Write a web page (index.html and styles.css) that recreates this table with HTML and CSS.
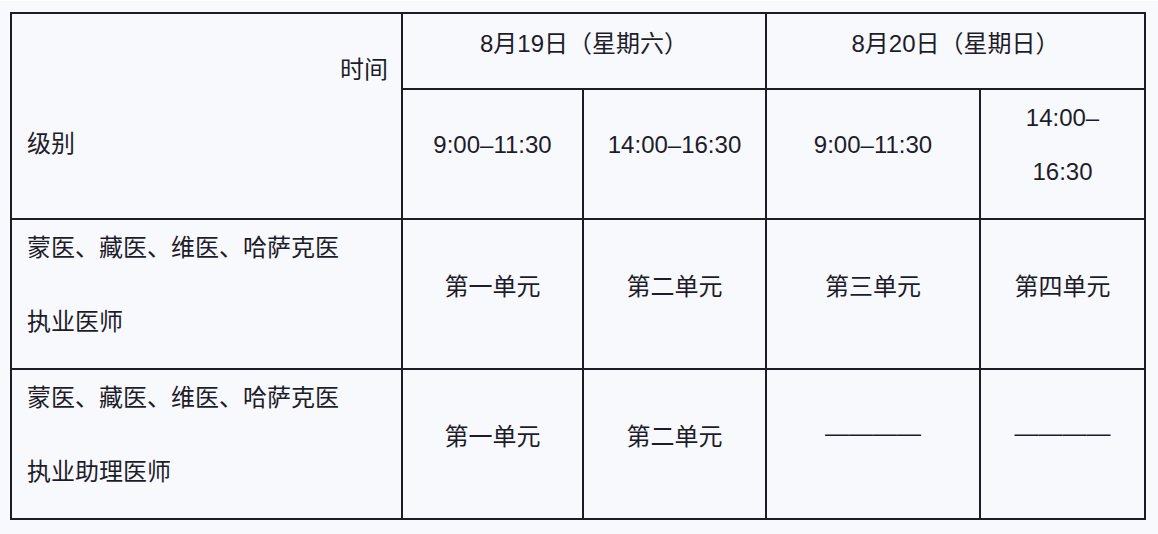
FILE: index.html
```html
<!DOCTYPE html>
<html lang="zh-CN">
<head>
<meta charset="utf-8">
<title>考试时间安排</title>
<link rel="stylesheet" href="styles.css">
</head>
<body>
<div class="page">
  <div class="grid">
    <div class="cell corner">
      <div class="line right">时间</div>
      <div class="line">级别</div>
    </div>
    <div class="cell center span2">8月19日（星期六）</div>
    <div class="cell center span2">8月20日（星期日）</div>
    <div class="cell center">9:00–11:30</div>
    <div class="cell center">14:00–16:30</div>
    <div class="cell center">9:00–11:30</div>
    <div class="cell center wrap"><div>14:00–</div><div>16:30</div></div>

    <div class="cell label">
      <div class="line">蒙医、藏医、维医、哈萨克医</div>
      <div class="line">执业医师</div>
    </div>
    <div class="cell center">第一单元</div>
    <div class="cell center">第二单元</div>
    <div class="cell center">第三单元</div>
    <div class="cell center">第四单元</div>

    <div class="cell label">
      <div class="line">蒙医、藏医、维医、哈萨克医</div>
      <div class="line">执业助理医师</div>
    </div>
    <div class="cell center">第一单元</div>
    <div class="cell center">第二单元</div>
    <div class="cell center dashcell"><span class="dash">————</span></div>
    <div class="cell center dashcell"><span class="dash">————</span></div>
  </div>
</div>
</body>
</html>
```

FILE: styles.css
```css
html, body {
  margin: 0;
  padding: 0;
  background: #f8f9fc;
}

body {
  width: 1158px;
  height: 534px;
  overflow: hidden;
  font-family: "Liberation Sans", "Noto Sans CJK SC", sans-serif;
  font-size: 24px;
  color: #1d1c2a;
}

.page {
  padding: 11px 0 0 10px;
  border-top: 1px solid #ffffff;
}

.grid {
  display: grid;
  grid-template-columns: 389px 179px 181px 212px 163px;
  grid-template-rows: 74px 128px 148px 148px;
  gap: 2px;
  padding: 2px;
  width: max-content;
  background: #1c1b26;
}

.cell {
  background: #f8f9fc;
  display: flex;
  flex-direction: column;
  justify-content: center;
  padding-bottom: 19px;
  box-sizing: border-box;
}

.center {
  align-items: center;
  text-align: center;
}

.span2 {
  grid-column: span 2;
}

.corner {
  grid-row: span 2;
  padding-left: 15px;
  padding-right: 13px;
}

.label {
  padding-left: 15px;
}

.line {
  line-height: 74px;
  white-space: nowrap;
}

.right {
  text-align: right;
}

.wrap div {
  line-height: 54px;
}

.dashcell {
  padding-bottom: 22px;
}

.dash {
  font-family: "Liberation Sans", sans-serif;
  font-size: 24px;
  line-height: 1;
  white-space: nowrap;
}
```
